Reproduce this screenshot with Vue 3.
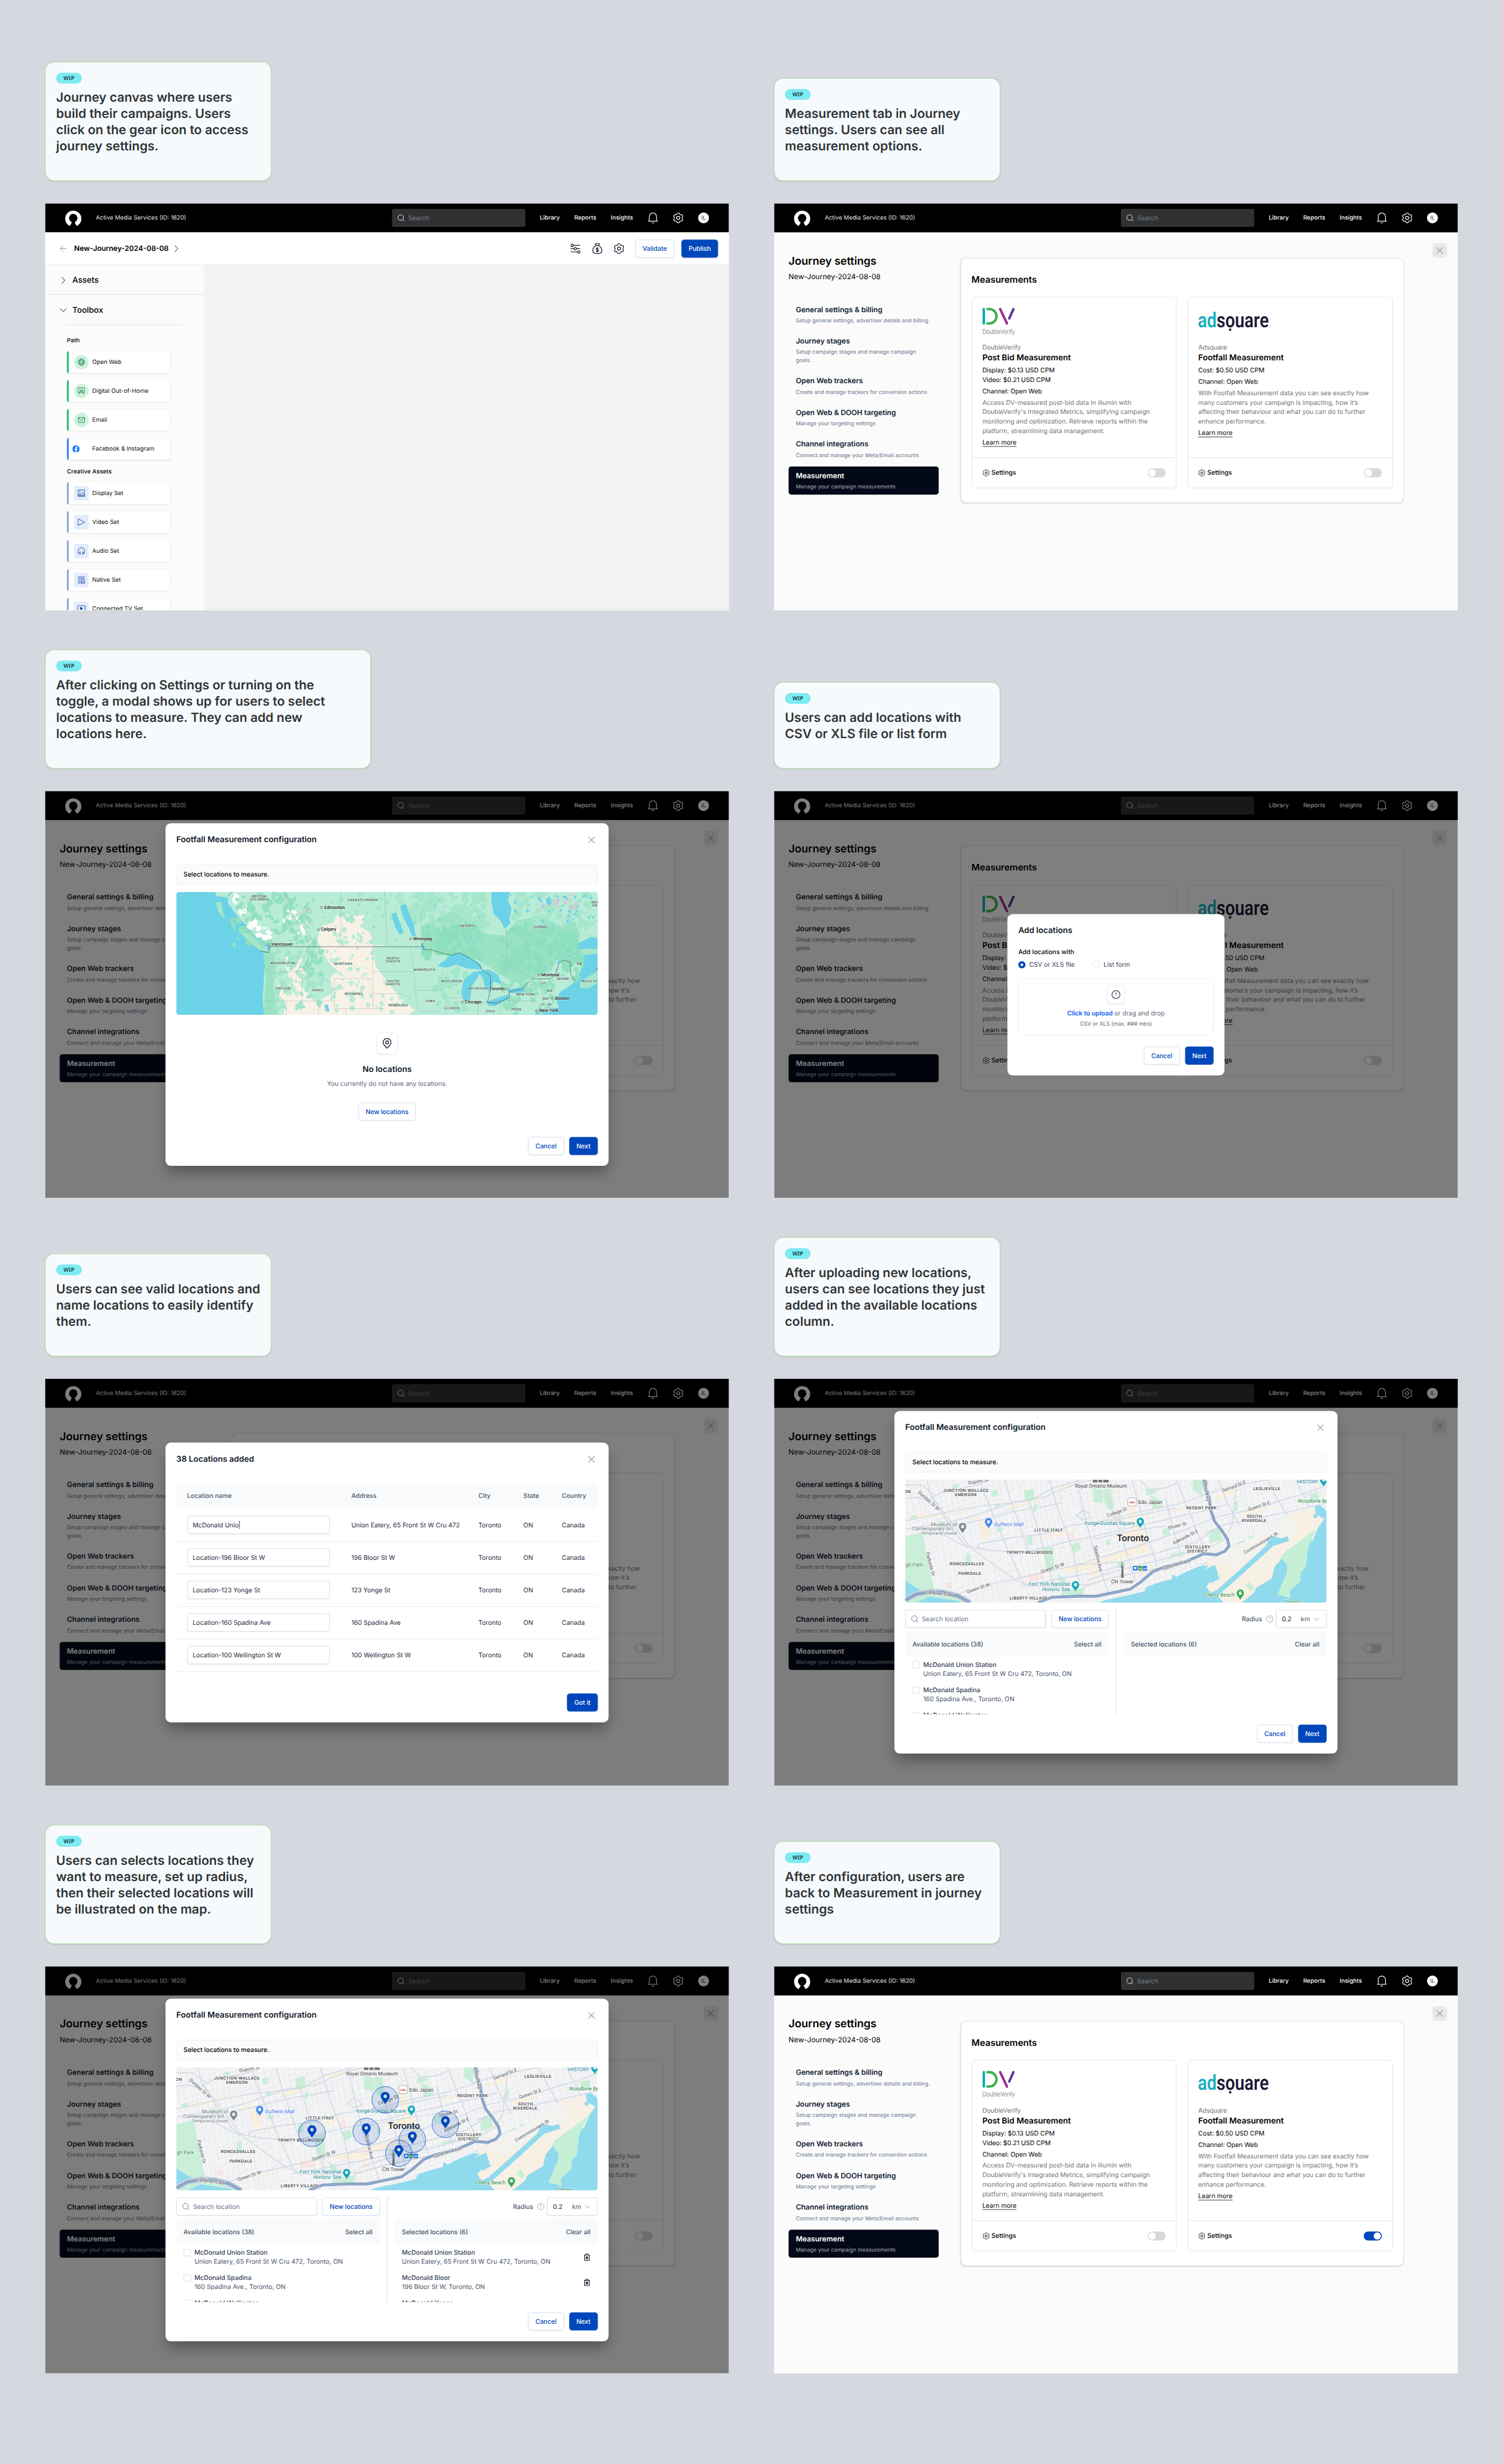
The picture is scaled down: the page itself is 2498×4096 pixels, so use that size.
<script setup>
const boards = [
  { note: 'Journey canvas where users\nbuild their campaigns. Users\nclick on the gear icon to access\njourney settings.', screen: 'canvas' },
  { note: 'Measurement tab in Journey\nsettings. Users can see all\nmeasurement options.', screen: 'settings' },
  { note: 'After clicking on Settings or turning on the\ntoggle, a modal shows up for users to select\nlocations to measure. They can add new\nlocations here.', wide: true, screen: 'settings', modal: 'empty' },
  { note: 'Users can add locations with\nCSV or XLS file or list form', screen: 'settings', modal: 'upload' },
  { note: 'Users can see valid locations and\nname locations to easily identify\nthem.', screen: 'settings', modal: 'table' },
  { note: 'After uploading new locations,\nusers can see locations they just\nadded in the available locations\ncolumn.', screen: 'settings', modal: 'select' },
  { note: 'Users can selects locations they\nwant to measure, set up radius,\nthen their selected locations will\nbe illustrated on the map.', screen: 'settings', modal: 'select', picked: true },
  { note: 'After configuration, users are\nback to Measurement in journey\nsettings', screen: 'settings', on: true },
]

const pathItems = [
  { label: 'Open Web', icon: 'globe' },
  { label: 'Digital Out-of-Home', icon: 'billboard' },
  { label: 'Email', icon: 'mail' },
  { label: 'Facebook & Instagram', icon: 'facebook' },
]
const creativeItems = [
  { label: 'Display Set', icon: 'image' },
  { label: 'Video Set', icon: 'play' },
  { label: 'Audio Set', icon: 'headphones' },
  { label: 'Native Set', icon: 'native' },
  { label: 'Connected TV Set', icon: 'tv' },
]

const nav = [
  { title: 'General settings & billing', text: 'Setup general settings, advertiser details and billing.' },
  { title: 'Journey stages', text: 'Setup campaign stages and manage campaign\ngoals.' },
  { title: 'Open Web trackers', text: 'Create and manage trackers for conversion actions' },
  { title: 'Open Web & DOOH targeting', text: 'Manage your targeting settings' },
  { title: 'Channel integrations', text: 'Connect and manage your Meta/Email accounts' },
  { title: 'Measurement', text: 'Manage your campaign measurements', active: true },
]

const providers = [
  {
    id: 'dv', vendor: 'DoubleVerify', name: 'Post Bid Measurement',
    prices: ['Display: $0.13 USD CPM', 'Video: $0.21 USD CPM'],
    about: "Access DV-measured post-bid data in illumin with\nDoubleVerify's Integrated Metrics, simplifying campaign\nmonitoring and optimization. Retrieve reports within the\nplatform, streamlining data management.",
  },
  {
    id: 'adsquare', vendor: 'Adsquare', name: 'Footfall Measurement',
    prices: ['Cost: $0.50 USD CPM'],
    about: 'With Footfall Measurement data you can see exactly how\nmany customers your campaign is impacting, how it’s\naffecting their behaviour and what you can do to further\nenhance performance.',
  },
]

const tableRows = [
  ['McDonald Unio', 'Union Eatery, 65 Front St W Cru 472'],
  ['Location-196 Bloor St W', '196 Bloor St W'],
  ['Location-123 Yonge St', '123 Yonge St'],
  ['Location-160 Spadina Ave', '160 Spadina Ave'],
  ['Location-100 Wellington St W', '100 Wellington St W'],
]
const available = [
  ['McDonald Union Station', 'Union Eatery, 65 Front St W Cru 472, Toronto, ON'],
  ['McDonald Spadina', '160 Spadina Ave., Toronto, ON'],
  ['McDonald Wellington', '100 Wellington St W, Toronto, ON'],
]
const selected = [
  ['McDonald Union Station', 'Union Eatery, 65 Front St W Cru 472, Toronto, ON'],
  ['McDonald Bloor', '196 Bloor St W, Toronto, ON'],
  ['McDonald Yonge', '123 Yonge St, Toronto, ON'],
]
const pins = [[462, 72], [595, 126], [420, 142], [300, 146], [522, 160], [492, 190]]

/* Six-toothed gear outline in a 24 unit box */
const gear = (() => {
  let d = ''
  for (let i = 0; i < 120; i++) {
    const a = (i / 120) * Math.PI * 2
    const r = 9.75 + 1.25 * Math.tanh(1.9 * (Math.cos(6 * (a - Math.PI / 2)) + 0.05))
    d += (i ? 'L' : 'M') + (12 + r * Math.cos(a)).toFixed(2) + ' ' + (12 - r * Math.sin(a)).toFixed(2)
  }
  return d + 'Z'
})()

const fit = (ox, oy, sx, sy) => {
  const pt = (x, y) => [+((x - ox) / sx).toFixed(1), +((y - oy) / sy).toFixed(1)]
  const line = (s) => 'M' + s.split(' ').map((p) => pt(...p.split(',').map(Number)).join(' ')).join('L')
  return { pt, line, area: (s) => line(s) + 'Z' }
}
const rng = (seed) => () => (seed = (seed * 16807) % 2147483647) / 2147483647

const tor = fit(21, 24, 1.633, 3)
const torStreets = (() => {
  const r = rng(77)
  let d = ''
  for (let x = -70; x < 930; x += 9 + r() * 7) {
    let y = 0
    while (y < 272) {
      const len = 50 + r() * 160
      d += `M${(x + y * 0.2).toFixed(1)} ${y.toFixed(0)}l${(len * 0.2).toFixed(1)} ${len.toFixed(1)}`
      y += len + (r() < 0.4 ? 12 : 0)
    }
  }
  for (let y = 4; y < 560; y += 9 + r() * 7) {
    let x = -10
    while (x < 932) {
      const len = 40 + r() * 130
      d += `M${x.toFixed(0)} ${(y - x * 0.33).toFixed(1)}l${len.toFixed(1)} ${(-len * 0.33).toFixed(1)}`
      x += len + (r() < 0.6 ? 24 : 0)
    }
  }
  return d
})()
const torRoads = [
  '21,300 110,262 290,200 470,165 560,75 660,24', '21,352 170,310 260,270 420,170 520,140 640,50 700,24',
  '21,610 80,590', '80,380 160,340 300,290 400,240 590,180', '280,480 290,450 400,410 520,385 620,330 760,290 860,240 1000,190 1100,130',
  '150,380 230,460 330,495 460,505 620,430 780,370 860,330 960,290 1080,240 1180,190', '220,775 340,715 520,640 640,590 780,510 900,440 1040,350 1150,270 1300,210 1400,150 1480,110 1542,60',
  '640,24 665,240 700,480 740,700 755,770', '740,60 775,260 820,500 850,700', '470,165 520,480 560,740', '100,24 110,120 200,380 250,480',
  '290,24 310,130 380,440 430,640 450,720', '380,24 410,200 470,520', '540,24 580,260 625,480 650,700', '840,24 880,300 930,600',
  '960,150 985,330 1020,540', '1000,24 1060,300 1100,480', '660,230 640,260 660,290 690,280 680,240 660,230',
  '870,24 900,90 960,80 1000,50', '1090,130 1200,70 1330,24', '1150,24 1190,200 1230,330', '1330,24 1370,170 1400,260', '1430,24 1460,130 1480,200',
  '1100,380 1180,320 1270,290 1400,240 1542,180', '640,590 800,570 950,500 1070,440 1140,350', '680,690 760,640 870,590 980,540 1100,480',
  '440,730 560,690 700,640 800,600', '21,150 60,140 100,160 150,110 280,60 320,30', '700,420 820,370 960,330', '690,330 840,270 1000,210',
].map(tor.line)
const torRail = ['110,120 180,290 260,480 420,690 470,730 560,735 680,720 780,670 920,620 1030,580 1100,500 1170,420', '660,735 740,690 860,640 960,600', '21,60 80,60 130,130', '1220,24 1210,170 1200,330 1170,430'].map(tor.line)
const torYellow = ['250,290 290,270 290,370 310,440 330,390 330,320 290,300', '820,180 840,170 880,370 900,460 870,480 840,330', '110,265 230,205 240,215 110,285', '390,210 500,130 510,150 400,225', '520,400 640,350 640,365 530,420', '560,620 700,560 860,470 900,450 900,500 760,570 640,640', '680,600 710,590 720,690 690,680', '780,400 860,350 870,390 790,430', '1140,130 1220,80 1230,100 1150,155', '1230,250 1340,200 1340,215 1240,270', '60,250 110,250 110,275 60,285', '700,130 800,100 800,110 700,140', '970,230 1090,190 1090,200 970,250', '300,740 340,720 340,735 300,750', '560,80 620,50 640,65 570,95'].map(tor.area)
const torPark = ['21,400 85,375 110,640 130,770 40,780 21,700', '450,100 485,80 490,160 455,170', '520,480 555,470 560,630 530,640', '735,90 765,85 775,210 755,225 740,170', '1060,24 1100,24 1090,130 1060,90', '590,760 670,740 660,790 580,800', '1120,360 1160,340 1165,420 1120,450', '905,120 950,170 950,210 915,220', '330,100 355,95 355,130 335,140', '190,60 215,50 215,75 190,90', '615,450 650,440 655,490 630,515', '460,395 480,390 480,460 460,455', '240,520 255,510 260,590 240,600', '950,350 975,345 975,390 952,395', '1260,405 1280,400 1282,440 1262,445', '790,570 815,570 815,605 790,610', '980,520 1030,500 1030,515 980,545', '890,90 930,80 930,110 890,130', '40,265 62,260 62,285 42,290', '345,190 365,185 365,210 345,215', '700,75 735,95 735,180 700,175', '1480,120 1515,105 1515,170 1485,180', '570,650 600,680 600,730 580,720', '485,185 500,185 495,235 483,235', '350,340 375,340 370,370 352,370', '1210,170 1225,165 1220,230 1205,235', '140,300 165,300 160,340 145,350', '745,430 760,420 762,455 748,458', '540,350 565,340 565,370 548,375', '1070,630 1090,620 1080,640 1062,645', '40,790 130,775 220,800 240,840 21,840'].map(tor.area)
const torPink = ['465,650 520,635 522,680 468,700', '770,250 800,250 805,310 780,320', '168,710 188,700 190,750 170,745', '610,380 630,375 635,430 615,430'].map(tor.area)
const torWater = ['720,840 740,825 775,812 830,790 885,765 893,735 940,705 985,685 985,650 1000,670 1030,640 1095,590 1150,520 1200,470 1240,430 1542,430 1542,840', '21,695 60,740 80,760 50,780 21,830', '110,800 160,815 215,830 220,840 60,840', '1500,200 1520,195 1542,230 1542,440 1490,440 1510,350'].map(tor.area)
const torSand = [
  '1095,625 1115,600 1105,560 1150,530 1210,470 1250,440 1320,390 1395,262 1490,210 1510,260 1535,285 1505,360 1440,440 1385,520 1375,560 1355,600 1345,680 1290,740 1280,775 1250,820 1235,840 1170,840 1150,795 1200,700 1190,690 1165,740 1125,775 1108,735 1125,690 1152,655 1140,590',
].map(tor.area)
const torLand = tor.area('1090,600 1150,530 1210,460 1330,370 1400,262 1430,300 1440,380 1330,440 1300,500 1210,620 1180,560 1120,590')
const torChannelBand = ['1158,760 1250,610 1345,450 1405,415'].map(tor.line)
const torBasins = ['1325,460 1340,395 1392,420 1370,445', '1120,690 1150,660 1158,680 1125,712', '1495,255 1508,250 1510,275 1497,280'].map(tor.area)
const torGreen = ['1440,440 1505,350 1475,480 1468,600 1450,640 1448,700 1410,760 1412,820 1395,800 1365,790 1385,700 1400,640 1400,590 1376,540', '1250,730 1262,700 1280,740 1270,765'].map(tor.area)
const torHighway = tor.line('500,840 550,805 650,797 710,798 770,775 835,750 870,705 915,635 955,605 1030,570 1070,540 1100,515 1145,522 1175,500 1190,465 1185,420 1160,350 1138,300 1125,230 1118,140 1105,90 1100,24')
const torWest = tor.line('21,825 60,785 110,768 160,772 210,795 255,840')

const torLabels = [
  ['ON', 30, 104, 'area'], ['JUNCTION-WALLACE', 240, 98, 'area'], ['EMERSON', 240, 125, 'area'], ['LITTLE ITALY', 539, 363, 'area'],
  ['TRINITY-BELLWOODS', 470, 510, 'area'], ['RONCESVALLES', 244, 584, 'area'], ['PARKDALE', 254, 650, 'area'], ['LIBERTY VILLAGE', 467, 812, 'area'],
  ['REGENT PARK', 1091, 212, 'area'], ['LESLIEVILLE', 1327, 87, 'area'], ['SOUTH', 1282, 270, 'area'], ['RIVERDALE', 1281, 297, 'area'],
  ['DISTILLERY', 1077, 473, 'area'], ['DISTRICT', 1076, 500, 'area'],
  ['Dupont St', 285, 34, 'road', -10], ['Dundas St W', 106, 163, 'road', 42], ['College St', 785, 240, 'road', -20], ['Shuter St', 1003, 330, 'road', -14],
  ['Adelaide St E', 1033, 405, 'road', -27], ['Gerrard St E', 1208, 70, 'road', -20], ['Queen St E', 1299, 199, 'road', -18], ['Commissioners St', 1305, 444, 'road', -31],
  ['Queen St W', 553, 609, 'road', -18], ['Queen St W', 284, 744, 'road', -18], ['Spadina Ave.', 718, 551, 'road', 78], ['Parkside Dr', 112, 584, 'road', 76],
  ['Valley Pkwy', 1109, 86, 'road', 83], ['Gardiner Expy', 1000, 587, 'road', -18], ['Gardiner Expy', 145, 779, 'road', 6],
  ['Royal Ontario Museum', 728, 66, 'place'], ['Edo Japan', 906, 174, 'place'], ['CN Tower', 805, 701, 'place'],
  ['Museum of', 208, 319, 'place grey end'], ['Contemporary Art...', 208, 349, 'place grey end'], ['Temporarily closed', 208, 380, 'tiny grey end'],
  ['Dufferin Mall', 395, 319, 'place blue'], ['Yonge-Dundas Square', 850, 313, 'place teal end'], ['Fort York National', 616, 718, 'place teal end'], ['Historic Site', 616, 752, 'place teal end'],
  ['HISTORY', 1512, 38, 'place teal end'], ['Woodbine Be', 1438, 165, 'place green start'], ['Cherry Beach', 1210, 788, 'place green end'], ['gh Park', 22, 587, 'place green start'], ['Tommy', 1422, 834, 'place green'],
  ['Toronto', 843, 414, 'city'],
].map(([t, x, y, k, a]) => ({ t, p: tor.pt(x, y), k, a: a || 0 }))
const torPins = [[322, 348, '#4285f4'], [228, 380, '#7b8794'], [870, 346, '#12a8ba'], [636, 766, '#12a8ba'], [1231, 822, '#34a853'], [1532, 70, '#12a8ba']].map(([x, y, c]) => ({ p: tor.pt(x, y), c }))

const can = fit(62, 423, 1.5525, 1.8233)
const blobs = (seed, zones) => {
  const r = rng(seed)
  return zones.map(([x0, y0, x1, y1, n, size, color]) => {
    let d = ''
    for (let i = 0; i < n; i++) {
      const [cx, cy] = can.pt(x0 + r() * (x1 - x0), y0 + r() * (y1 - y0))
      const s = size * (0.4 + r())
      for (let k = 0; k < 8; k++) {
        const a = (k / 8) * Math.PI * 2
        const q = s * (0.35 + r() * 0.9)
        d += (k ? 'L' : 'M') + (cx + Math.cos(a) * q * 0.9).toFixed(1) + ' ' + (cy + Math.sin(a) * q).toFixed(1)
      }
      d += 'Z'
    }
    return { d, color }
  })
}
const canLand = can.area('195,423 200,440 238,445 240,470 262,505 290,545 310,562 325,592 350,612 378,632 384,655 378,670 362,668 366,720 362,790 358,860 364,918 1294,918 1300,903 1340,893 1376,890 1366,858 1380,826 1408,806 1432,784 1450,740 1462,700 1440,672 1410,690 1380,706 1364,716 1390,680 1440,632 1480,606 1509,602 1509,423')
const canExtra = ['285,585 312,590 342,618 372,646 380,664 352,660 322,634 296,608', '197,465 214,463 228,532 206,502', '1450,812 1446,790 1470,768 1509,742 1509,790 1475,812', '1420,660 1470,650 1509,655 1509,672 1440,680', '1440,590 1509,612 1509,600'].map(can.area)
const canSand = ['560,560 600,548 612,520 640,512 680,520 705,515 710,540 690,560 730,590 735,635 790,640 740,640 745,720 790,790 830,850 880,900 860,918 430,918 436,862 410,840 412,790 440,750 430,700 450,672 490,690 505,740 490,800 540,870 600,830 590,770 610,740 580,700 560,650 545,620', '436,862 600,862 610,918 440,918'].map(can.area)
const canDark = ['905,560 960,530 1010,500 1050,530 1120,590 1190,600 1230,540 1300,520 1380,560 1430,540 1450,600 1380,670 1350,740 1290,770 1230,790 1180,760 1130,720 1060,680 1030,665 990,670 940,650 905,630', '360,670 395,660 405,720 395,800 410,918 362,918 370,760'].map(can.area)
const canBlobs = blobs(4242, [
  [250, 430, 540, 640, 120, 8, '#93e0c0'], [400, 650, 560, 915, 60, 8, '#a4e6cb'], [560, 430, 860, 540, 50, 6, '#a6e7cd'], [870, 430, 1130, 560, 70, 12, '#a6e7cc'],
  [900, 560, 1100, 680, 40, 12, '#8edfbd'], [1180, 560, 1450, 740, 70, 13, '#8edfbd'], [1220, 430, 1500, 560, 60, 9, '#a6e7cc'], [960, 740, 1060, 900, 30, 10, '#a3e6ca'],
  [1180, 790, 1360, 915, 50, 9, '#97e2c3'], [560, 660, 740, 850, 40, 6, '#b9ecd6'], [430, 720, 500, 860, 14, 7, '#b9ecd6'], [600, 560, 780, 640, 34, 5, '#b9ecd6'],
  [610, 780, 860, 910, 30, 6, '#b9ecd6'], [500, 660, 560, 760, 26, 8, '#93e0c0'], [1380, 680, 1450, 780, 14, 8, '#93e0c0'],
  [1310, 430, 1440, 490, 26, 6, '#cfcfd2'], [450, 490, 530, 580, 16, 4, '#cfcfd2'],
  [280, 480, 305, 520, 8, 5, '#fff'], [312, 540, 340, 570, 14, 6, '#fff'], [340, 565, 384, 605, 18, 6, '#fff'], [430, 495, 480, 545, 12, 4, '#fff'], [480, 560, 505, 600, 8, 4, '#fff'], [256, 430, 272, 470, 7, 5, '#fff'],
  [880, 440, 1130, 660, 40, 2, '#6cd2e7'], [1210, 430, 1500, 560, 60, 3, '#6cd2e7'], [560, 560, 860, 700, 12, 2.4, '#6cd2e7'], [1180, 600, 1440, 740, 20, 2, '#6cd2e7'],
])
const canWater = ['1143,423 1208,423 1200,455 1213,490 1205,535 1210,550 1188,572 1176,540 1152,512 1145,470', '830,478 850,472 862,512 878,556 884,600 872,604 862,572 842,528', '800,512 815,505 832,552 842,590 828,594 812,560', '958,722 1000,682 1030,667 1064,682 1108,716 1112,736 1062,732 1022,716 990,728', '1064,762 1084,744 1108,746 1078,800 1070,856 1050,866 1040,830 1048,780', '1096,742 1134,736 1166,756 1180,796 1150,784 1140,830 1124,812 1114,770', '1126,866 1200,836 1206,850 1156,884 1132,880', '1198,816 1262,806 1254,828 1206,832', '904,640 914,636 912,660 902,656', '570,880 582,876 588,906 576,904', '1330,452 1344,440 1350,470 1336,480'].map(can.area)
const canDash = ['439,423 442,500 500,570 545,640 548,644', '627,423 627,644', '777,423 786,640', '903,644 903,510 970,423', '737,644 737,893', '737,744 878,744', '865,644 878,744 882,820 892,905 968,905', '605,773 737,773', '605,773 605,893 775,893', '358,863 605,863', '494,863 494,740 513,700 513,644', '366,736 400,750 500,740', '515,700 540,760 560,770 600,790', '737,833 838,833 870,858', '880,820 975,820', '440,863 440,918', '550,863 550,918', '990,850 1050,850', '1195,572 1195,700 1240,750 1290,770', '975,820 990,850 985,918', '1100,870 1180,862 1290,862', '1175,862 1175,918', '1098,868 1098,918', '645,893 645,918', '1313,775 1320,860', '1356,760 1345,860', '1437,480 1430,520 1480,550 1509,540'].map(can.line)
const canBorder = ['380,644 903,644 906,630 912,655 940,657 980,672 1008,678 1032,668 1070,690 1098,712 1116,742 1140,760 1142,810 1130,868 1160,872 1205,850 1205,825 1245,815 1285,773 1346,773 1366,752 1375,712 1390,698 1414,706 1416,752 1432,782', '240,440 252,423', '350,660 378,668 384,645'].map(can.line)
const canLabels = [
  ['BRITISH', 347, 441, 'area'], ['COLUMBIA', 347, 454, 'area'], ['SASKATCHEWAN', 702, 456, 'area'], ['ONTARIO', 1061, 559, 'area'], ['QUEBEC', 1314, 565, 'area'], ['NEW', 1487, 465, 'area start'], ['AN', 1490, 478, 'area start'],
  ['WASHINGTON', 428, 710, 'area'], ['MONTANA', 635, 713, 'area'], ['NORTH', 806, 690, 'area'], ['DAKOTA', 806, 704, 'area'], ['MINNESOTA', 914, 736, 'area'], ['SOUTH', 806, 782, 'area'], ['DAKOTA', 806, 796, 'area'],
  ['OREGON', 428, 811, 'area'], ['IDAHO', 547, 819, 'area'], ['WYOMING', 671, 835, 'area'], ['NEBRASKA', 824, 879, 'area'], ['IOWA', 934, 864, 'area'], ['WISCONSIN', 1007, 783, 'area'], ['MICHIGAN', 1098, 811, 'area'], ['ILLINOIS', 1009, 893, 'area'],
  ['OHIO', 1140, 905, 'area'], ['PENN', 1230, 898, 'area'], ['NEW YORK', 1262, 837, 'area'], ['VT', 1323, 793, 'area'], ['NH', 1343, 823, 'area'], ['MA', 1330, 853, 'area'], ['CT', 1320, 877, 'area'], ['RI', 1345, 877, 'area'], ['MAINE', 1390, 774, 'area'], ['NB', 1446, 713, 'area'], ['NOVA SCO', 1454, 783, 'area start'], ['P', 1502, 735, 'area start'],
  ['Edmonton', 570, 486, 'town', 561], ['Calgary', 558, 575, 'town', 550], ['Vancouver', 389, 636, 'town', 381], ['Winnipeg', 875, 613, 'town', 866], ['Montreal', 1315, 758, 'town', 1307], ['Chicago', 1053, 868, 'town', 1044], ['Boston', 1362, 854, 'town', 1354], ['New York', 1308, 902, 'town', 1299], ['Toronto', 1190, 815, 'town end', 1198],
].map(([t, x, y, k, d]) => ({ t, p: can.pt(x, y), k, dot: d ? can.pt(d, y) : null }))
</script>

<template>
  <svg class="sprite" aria-hidden="true">
    <defs>
      <symbol id="i-gear" viewBox="0 0 24 24"><path :d="gear" /><circle cx="12" cy="12" r="3.5" /></symbol>
      <symbol id="i-bell" viewBox="0 0 24 24"><path d="M4 19.2V9a8 8 0 0 1 16 0v10.2M1.2 19.2h21.6M9.2 23h5.6" /></symbol>
      <symbol id="i-search" viewBox="0 0 16 16"><circle cx="7.2" cy="7.2" r="6.2" /><path d="m11.6 11.8 3.8 3.8" /></symbol>
      <symbol id="i-x" viewBox="0 0 16 16"><path d="m1.2 1.2 13.6 13.6M14.8 1.2 1.2 14.8" /></symbol>
      <symbol id="i-back" viewBox="0 0 16 16"><path d="M15 8H1.4M8 1.2 1.4 8 8 14.8" /></symbol>
      <symbol id="i-right" viewBox="0 0 16 16"><path d="m4.6 1 6.8 7-6.8 7" /></symbol>
      <symbol id="i-down" viewBox="0 0 16 16"><path d="m1 4.6 7 6.8 7-6.8" /></symbol>
      <symbol id="i-sliders" viewBox="0 0 24 24"><circle cx="4.4" cy="4.8" r="2.6" /><path d="M7 4.8h15M1 12h7.9M14.1 12H22M1 19.2h15.4" /><circle cx="11.5" cy="12" r="2.6" /><circle cx="19" cy="19.2" r="2.6" /></symbol>
      <symbol id="i-money" viewBox="0 0 24 24"><path d="M8.6 5.4 7.4 1.2h9.2l-1.2 4.2zM8.6 5.4C4.6 8.2 2 12 2 16c0 4.6 2.6 6.7 6.5 6.7h7c3.9 0 6.5-2.1 6.5-6.7 0-4-2.6-7.800-6.6-10.6" /><path d="M14.6 11.9c-.5-.9-1.4-1.3-2.6-1.3-1.5 0-2.6.7-2.6 1.9 0 2.6 5.3 1.3 5.3 4 0 1.2-1.1 2-2.7 2-1.4 0-2.4-.6-2.8-1.6M12 9v11" /></symbol>
      <symbol id="i-globe" viewBox="0 0 16 16"><circle cx="8" cy="8" r="7" /><ellipse cx="8" cy="8" rx="3.6" ry="7" /><path d="M1.7 5.4h12.6M1.7 10.6h12.6" /></symbol>
      <symbol id="i-billboard" viewBox="0 0 16 16"><path d="M.6 1h14.8v10.4H.6zM3.4 11.4V15M12.6 11.4V15M3.8 8.8l2.6-4 2 2.8 1.4-2.4 2.6 3.6z" /></symbol>
      <symbol id="i-mail" viewBox="0 0 16 16"><path d="M1.2 2.6h13.6v10.8H1.2zM1.2 3l6.8 6 6.8-6" /></symbol>
      <symbol id="i-image" viewBox="0 0 16 16"><path d="M.7.9h14.6v14.2H.7zM.9 11.6l3.4-2 2.2 1.6 4-4.8 4.6 5.6M.9 13h14" /><circle cx="4.7" cy="4.8" r=".7" /></symbol>
      <symbol id="i-play" viewBox="0 0 16 16"><path d="m.8.8 14.4 7.2L.8 15.2z" /></symbol>
      <symbol id="i-headphones" viewBox="0 0 16 16"><path d="M.8 14V7.6a7.2 7 0 0 1 14.4 0V14M5.4 9.600v5.600c-1.6 0-2.4-1-2.4-2.8s.8-2.8 2.4-2.8zM10.6 9.6v5.6c1.6 0 2.4-1 2.4-2.8s-.8-2.8-2.4-2.8z" /></symbol>
      <symbol id="i-native" viewBox="0 0 16 16"><path d="M0 .8h16M0 4h16M0 7.6h5.6M0 11.2h5.6M0 14.6h5.6M7.6 7.4H15.4v8H7.6zM8 14.4l2.4-3 1.6 1.6 1.4-2 1.6 2.6" /></symbol>
      <symbol id="i-tv" viewBox="0 0 18 16"><path d="M.8.8h16.4v12.4H.8z" /><path d="m7 4 5 3-5 3z" fill="currentColor" /></symbol>
      <symbol id="i-facebook" viewBox="0 0 16 16"><path stroke="none" fill="#1877f2" d="M16 8a8 8 0 1 0-9.25 7.9v-5.59H4.72V8h2.03V6.24c0-2 1.19-3.11 3.02-3.11.88 0 1.79.16 1.79.16v1.97h-1.01c-.99 0-1.3.62-1.3 1.25V8h2.22l-.36 2.31H9.25v5.59A8 8 0 0 0 16 8z" /></symbol>
      <symbol id="i-pin" viewBox="0 0 20 24"><path d="M10 22.600C5.200 18 1.2 14.4 1.2 9.7a8.8 8.6 0 0 1 17.6 0c0 4.7-4 8.3-8.8 12.9z" /><circle cx="10" cy="9.7" r="3.3" /></symbol>
      <symbol id="i-alert" viewBox="0 0 20 20"><circle cx="10" cy="10" r="8.8" /><path d="M10 5.6v5M10 13.4v1" /></symbol>
      <symbol id="i-help" viewBox="0 0 16 16"><circle cx="8" cy="8" r="7.2" /><path d="M6 6.2c.1-1.2.9-1.9 2-1.9s2 .7 2 1.8c0 1.5-1.9 1.5-1.9 3.1M8.05 11v.9" /></symbol>
      <symbol id="i-trash" viewBox="0 0 14 16"><path d="M.4 3.4h13.2M4.4 3.2V.8h5.2v2.4M1.8 3.6v11.6h10.4V3.6M5.2 6.2v6.2M7 6.2v6.2M8.8 6.2v6.2" /></symbol>
      <symbol id="i-marker" viewBox="0 0 20 28"><path fill="#0047bb" stroke="none" fill-rule="evenodd" d="M10 28C7 20.500 0 16.500 0 9.800a10 9.800 0 0 1 20 0C20 16.500 13 20.500 10 28zM10 6a3.800 3.900 0 1 0 0 7.800A3.800 3.900 0 0 0 10 6z" /></symbol>
    </defs>
  </svg>

  <div class="viewport">
  <main class="sheet">
    <section v-for="(b, i) in boards" :key="i" class="cell">
      <div class="note-area">
        <article class="note" :class="{ wide: b.wide }">
          <span class="pill">WIP</span>
          <p>{{ b.note }}</p>
        </article>
      </div>

      <div class="frame">
        <header class="topbar">
          <svg class="logo" viewBox="0 0 36 35"><path fill="#fff" d="M10.4 35A18 17.8 0 1 1 25.6 35L21 26.7a9.2 9.6 0 1 0-6 0z" /></svg>
          <span class="account">Active Media Services (ID: 1620)</span>
          <div class="top-search"><svg class="ic s16"><use href="#i-search" /></svg>Search</div>
          <nav class="top-links"><span>Library</span><span>Reports</span><span>Insights</span></nav>
          <svg class="ic s24"><use href="#i-bell" /></svg>
          <svg class="ic s24"><use href="#i-gear" /></svg>
          <span class="avatar">IL</span>
        </header>

        <template v-if="b.screen === 'canvas'">
          <div class="toolbar">
            <svg class="ic s16 muted"><use href="#i-back" /></svg>
            <b>New-Journey-2024-08-08</b>
            <svg class="ic s16"><use href="#i-right" /></svg>
            <div class="tools">
              <svg class="ic s24"><use href="#i-sliders" /></svg>
              <svg class="ic s24"><use href="#i-money" /></svg>
              <svg class="ic s24"><use href="#i-gear" /></svg>
            </div>
            <button class="btn ghost">Validate</button>
            <button class="btn solid">Publish</button>
          </div>
          <div class="work">
            <aside class="side">
              <div class="fold first"><svg class="ic s16"><use href="#i-right" /></svg>Assets</div>
              <div class="fold"><svg class="ic s16"><use href="#i-down" /></svg>Toolbox</div>
              <div class="kit">
                <h6>Path</h6>
                <div v-for="p in pathItems" :key="p.icon" class="tool path" :class="p.icon">
                  <i><svg class="ic s16"><use :href="'#i-' + p.icon" /></svg></i>{{ p.label }}
                </div>
                <h6>Creative Assets</h6>
                <div v-for="p in creativeItems" :key="p.icon" class="tool creative" :class="p.icon">
                  <i><svg class="ic s16"><use :href="'#i-' + p.icon" /></svg></i>{{ p.label }}
                </div>
              </div>
            </aside>
            <div class="board"></div>
          </div>
        </template>

        <div v-else class="settings">
          <aside class="menu">
            <h1>Journey settings</h1>
            <p class="journey">New-Journey-2024-08-08</p>
            <ul>
              <li v-for="n in nav" :key="n.title" :class="{ active: n.active }"><b>{{ n.title }}</b><span>{{ n.text }}</span></li>
            </ul>
          </aside>
          <section class="card">
            <h2>Measurements</h2>
            <div class="providers">
              <article v-for="p in providers" :key="p.id" class="provider">
                <div class="body">
                  <svg v-if="p.id === 'dv'" class="brand" viewBox="0 0 160 60">
                    <g fill="none" stroke-width="5.4" stroke-linecap="round">
                      <path stroke="#00aeb0" d="M2.7 2.7v31.8" />
                      <path stroke="#3fb04c" d="M10.6 2.7H15a15.9 15.9 0 0 1 0 31.8h-4.4" />
                      <path stroke="#9c2a90" d="m39 2.7 15 31.8" />
                      <path stroke="#5a3a98" d="M68.3 2.7 59 23.4" />
                    </g>
                    <text x="-.5" y="57" textLength="72" lengthAdjust="spacingAndGlyphs" class="dv-name">DoubleVerify</text>
                  </svg>
                  <svg v-else class="brand" viewBox="0 0 160 60">
                    <text x="-1" y="42.400" textLength="157" lengthAdjust="spacingAndGlyphs" class="adsq"><tspan fill="#14b0bf">ad</tspan>sọuare</text>
                  </svg>
                  <span class="vendor">{{ p.vendor }}</span>
                  <h3>{{ p.name }}</h3>
                  <p><template v-for="x in p.prices" :key="x">{{ x }}<br></template></p>
                  <p>Channel: Open Web</p>
                  <p class="about">{{ p.about }}</p>
                  <p><a>Learn more</a></p>
                </div>
                <footer>
                  <svg class="ic s16"><use href="#i-gear" /></svg>Settings
                  <span class="toggle" :class="{ on: b.on && p.id === 'adsquare' }"><i></i></span>
                </footer>
              </article>
            </div>
          </section>
          <span class="close"><svg class="ic s16"><use href="#i-x" /></svg></span>
        </div>

        <div v-if="b.modal" class="scrim">
          <div v-if="b.modal === 'upload'" class="modal upload">
            <h4>Add locations</h4>
            <label class="q">Add locations with</label>
            <div class="radios"><span><i class="on"></i>CSV or XLS file</span><span><i></i>List form</span></div>
            <div class="drop">
              <span class="tile s40"><svg class="ic s20"><use href="#i-alert" /></svg></span>
              <p><b>Click to upload</b> or drag and drop</p>
              <small>CSV or XLS (max. ### mbs)</small>
            </div>
            <div class="actions"><button class="btn ghost">Cancel</button><button class="btn solid">Next</button></div>
          </div>

          <div v-else-if="b.modal === 'table'" class="modal table">
            <div class="head"><h4>38 Locations added</h4><svg class="ic s16"><use href="#i-x" /></svg></div>
            <div class="tr th"><span>Location name</span><span>Address</span><span>City</span><span>State</span><span>Country</span></div>
            <div v-for="(r, k) in tableRows" :key="r[0]" class="tr">
              <span><em class="field">{{ r[0] }}<i v-if="!k" class="caret"></i></em></span><span>{{ r[1] }}</span><span>Toronto</span><span>ON</span><span>Canada</span>
            </div>
            <div class="actions"><button class="btn solid">Got it</button></div>
          </div>

          <div v-else class="modal big">
            <div class="head"><h4>Footfall Measurement configuration</h4><svg class="ic s16"><use href="#i-x" /></svg></div>
            <div class="hint">Select locations to measure.</div>

            <svg v-if="b.modal === 'empty'" class="map" viewBox="0 0 932 272">
              <rect width="932" height="272" fill="#6cd2e7" />
              <path :d="canLand" fill="#b9ecd6" />
              <path v-for="d in canExtra" :key="d" :d="d" fill="#a4e6cb" />
              <path v-for="d in canSand" :key="d" :d="d" fill="#f8f1e6" />
              <path v-for="d in canDark" :key="d" :d="d" fill="#9ae2c4" />
              <path v-for="(z, k) in canBlobs" :key="k" :d="z.d" :fill="z.color" />
              <path v-for="d in canWater" :key="d" :d="d" fill="#6cd2e7" />
              <g fill="none" stroke="#7d9a95" stroke-width=".8" stroke-dasharray="2 1.6"><path v-for="d in canDash" :key="d" :d="d" /></g>
              <g fill="none" stroke="#4b5c5c" stroke-width="1"><path v-for="d in canBorder" :key="d" :d="d" /></g>
              <g v-for="(l, k) in canLabels" :key="k">
                <circle v-if="l.dot" :cx="l.dot[0]" :cy="l.dot[1]" r="2.2" fill="#fff" stroke="#333" />
                <text :x="l.p[0]" :y="l.p[1]" :class="['ml', 'ca', ...l.k.split(' ')]">{{ l.t }}</text>
              </g>
            </svg>

            <svg v-else class="map" viewBox="0 0 932 272">
              <rect width="932" height="272" fill="#f4f4f5" />
              <path v-for="d in torYellow" :key="d" :d="d" fill="#fdf1dc" />
              <path v-for="d in torPink" :key="d" :d="d" fill="#fde3e1" />
              <path v-for="d in torPark" :key="d" :d="d" fill="#c5f0d5" />
              <path :d="torStreets" fill="none" stroke="#e0e4eb" stroke-width="1" />
              <path v-for="d in torWater" :key="d" :d="d" fill="#90daee" />
              <path v-for="d in torSand" :key="d" :d="d" fill="#f7f0e4" />
              <path :d="torLand" fill="#f4f2ef" />
              <path v-for="d in torChannelBand" :key="d" :d="d" fill="none" stroke="#90daee" stroke-width="11" />
              <path v-for="d in torBasins" :key="d" :d="d" fill="#90daee" />
              <path v-for="d in torGreen" :key="d" :d="d" fill="#c5f0d5" />
              <g fill="none" stroke="#d9dadd" stroke-width="2.2"><path v-for="d in torRail" :key="d" :d="d" /></g>
              <g fill="none" stroke="#d2dae5" stroke-width="2.2" stroke-linejoin="round"><path v-for="d in torRoads" :key="d" :d="d" /></g>
              <path :d="torWest" fill="none" stroke="#c9d3df" stroke-width="13" />
              <g fill="none" stroke-linejoin="round">
                <path v-for="d in [torHighway, torWest]" :key="'o' + d" :d="d" stroke="#6f8cb5" stroke-width="6" />
                <path v-for="d in [torHighway, torWest]" :key="d" :d="d" stroke="#8fa8cb" stroke-width="4.4" />
              </g>
              <g fill="#777"><path d="M479 182h1.6l.6 10h2.4v2h-1.6l1.4 23h-6.2l1.4-23H476v-2h2.4z" /><path d="M415 0h10v6h-10zM427 0h9v6h-9zM438 0h12v6h-12z" /></g>
              <g><rect x="492.5" y="40.5" width="18" height="18" rx="2" fill="#fff" stroke="#999" /><text x="501.5" y="52" class="edo">edo</text></g>
              <g class="transit"><rect x="503.5" y="191" width="10" height="10" rx="1.5" fill="#1a73e8" /><path d="M506 193.5h5v4.5h-5zM506.5 200l1-1.5M510.5 200l-1-1.5" fill="#fff" /><rect x="514.5" y="191" width="9" height="10" rx="1.5" fill="#3f9142" /><text x="519" y="198.3">GO</text><rect x="524.5" y="191" width="10" height="10" rx="1.5" fill="#1a73e8" /><text x="529.5" y="198.3">UP</text></g>
              <g v-for="(l, k) in torLabels" :key="k" :transform="`translate(${l.p[0]} ${l.p[1]}) rotate(${l.a})`"><text :class="['ml', 'to', ...l.k.split(' ')]">{{ l.t }}</text></g>
              <g v-for="(q, k) in torPins" :key="'q' + k" :transform="`translate(${q.p[0]} ${q.p[1]})`">
                <path :fill="q.c" d="M0 0C-1.5-5-8-8.5-8-15a8 8 0 0 1 16 0C8-8.5 1.5-5 0 0z" /><path fill="#fff" d="M-3.5-17 0-19l3.5 2v1h-7zM-3-15.5h6v4h-6z" />
              </g>
              <template v-if="b.picked">
                <g v-for="(q, k) in pins" :key="'p' + k">
                  <circle :cx="q[0]" :cy="q[1]" r="29.5" fill="#0047bb" fill-opacity=".12" stroke="#0047bb" />
                  <use href="#i-marker" :x="q[0] - 10" :y="q[1] - 18" width="20" height="28" />
                </g>
              </template>
            </svg>

            <div v-if="b.modal === 'empty'" class="empty">
              <span class="tile s48"><svg class="ic pin"><use href="#i-pin" /></svg></span>
              <h4>No locations</h4>
              <p>You currently do not have any locations.</p>
              <button class="btn ghost">New locations</button>
            </div>
            <div v-else class="pick">
              <div class="col">
                <div class="row"><div class="field grow"><svg class="ic s16"><use href="#i-search" /></svg>Search location</div><button class="btn ghost">New locations</button></div>
                <div class="bar"><span>Available locations (38)</span><span>Select all</span></div>
                <div v-for="a in available" :key="a[0]" class="loc"><i class="box"></i><p><b>{{ a[0] }}</b>{{ a[1] }}</p></div>
              </div>
              <div class="rule"></div>
              <div class="col">
                <div class="row end"><span>Radius</span><svg class="ic s16 help"><use href="#i-help" /></svg><div class="field radius"><b>0.2</b><span>km</span><svg class="ic s13"><use href="#i-down" /></svg></div></div>
                <div class="bar"><span>Selected locations (6)</span><span>Clear all</span></div>
                <template v-if="b.picked">
                  <div v-for="a in selected" :key="a[0]" class="loc"><p><b>{{ a[0] }}</b>{{ a[1] }}</p><svg class="ic trash"><use href="#i-trash" /></svg></div>
                </template>
              </div>
            </div>
            <div class="actions"><button class="btn ghost">Cancel</button><button class="btn solid">Next</button></div>
          </div>
        </div>
      </div>
    </section>
  </main>
  </div>
</template>

<style>
html, body { margin: 0; background: #d5d9df; }
</style>

<style scoped>
* { box-sizing: border-box; margin: 0; padding: 0; }
.sprite { display: none; }
.viewport { width: 2498px; height: 4096px; overflow: hidden; }
.sheet { transform: scale(.7515); transform-origin: 0 0; width: 3324px; height: 5450px; padding: 50px 100px 0; display: grid; grid-template-columns: 1512px 1512px; grid-auto-rows: 1300px; column-gap: 100px; align-content: start; background: #d5d9df; font: 400 14px/21px Inter, "Liberation Sans", sans-serif; color: #000; text-rendering: geometricPrecision; overflow: hidden; }
.note-area { height: 400px; padding-bottom: 50px; display: flex; align-items: flex-end; }
.cell { margin-top: 0; height: 1300px; }
.note-area { height: 350px; padding-bottom: 0; margin-bottom: 50px; }
.note { width: 500px; padding: 24px 23px 58px; border: 1px solid #a9ec90; border-radius: 20px; background: #f7fafc; box-shadow: 0 1px 3px rgba(16, 24, 40, .12); }
.note.wide { width: 720px; }
.pill { display: block; width: 57px; height: 24px; border-radius: 12px; background: #7debf2; color: #0d3540; font: 600 12px/24px "Noto Sans", sans-serif; letter-spacing: .3px; text-align: center; margin-top: -1px; }
.note p { margin-top: 12px; font-size: 28px; line-height: 36px; font-weight: 600; color: #2f3437; white-space: pre; }
.frame { position: relative; width: 1512px; height: 900px; overflow: hidden; background: #fbfbfb; display: flex; flex-direction: column; }

.ic { display: block; flex: none; fill: none; stroke: currentColor; stroke-width: 1.2; overflow: visible; }
.s13 { width: 13px; height: 13px; }
.s16 { width: 16px; height: 16px; }
.s20 { width: 20px; height: 20px; stroke-width: 1.7; }
.s24 { width: 24px; height: 24px; stroke-width: 1.6; }

.topbar { height: 64px; flex: none; background: #000; color: #fff; display: flex; align-items: center; padding: 0 44px; gap: 32px; }
.logo { width: 36px; height: 35px; margin-bottom: -1px; }
.account { font-size: 13px; color: #e2e2e2; margin-right: auto; }
.top-search { width: 295px; height: 40px; border-radius: 4px; background: #2f3133; color: #7d8084; display: flex; align-items: center; gap: 8px; padding-left: 12px; }
.top-search .ic { color: #fff; }
.top-links { display: flex; gap: 32px; font-size: 13px; font-weight: 500; letter-spacing: .05px; }
.avatar { width: 24px; height: 24px; border-radius: 50%; background: #fff; color: #333; font-size: 12px; line-height: 24px; text-align: center; }

.btn { height: 40px; padding: 0 15px; border: 1px solid #cbd9f1; border-radius: 6px; background: #fff; color: #0047bb; font: 500 14px/20px Inter, sans-serif; box-shadow: 0 1px 2px rgba(16, 24, 40, .06); flex: none; }
.btn.solid { background: #0047bb; border-color: #0047bb; color: #fff; }

.toolbar { height: 72px; flex: none; background: #fff; border-bottom: 1px solid #d9d9d9; display: flex; align-items: center; padding: 0 24px 0 32px; gap: 16px; }
.toolbar b { font-size: 16px; font-weight: 600; margin-right: -7px; }
.toolbar .muted { color: #888; }
.tools { display: flex; gap: 24px; margin-left: auto; margin-right: 8px; color: #0f172a; }
.work { flex: 1; display: flex; min-height: 0; }
.side { width: 352px; overflow: hidden; background: #fbfbfb; }
.board { flex: 1; background: #f2f2f2; }
.fold { height: 66px; display: flex; align-items: center; gap: 12px; padding-left: 32px; padding-top: 2px; font-size: 18px; font-weight: 500; }
.fold.first { border-bottom: 1px solid #d9d9d9; }
.kit { margin-left: 48px; width: 256px; border-top: 1px solid #d9d9d9; padding-top: 24px; }
.kit h6 { font-size: 13px; line-height: 20px; font-weight: 500; margin-bottom: 14px; letter-spacing: .1px; }
.tool { width: 228px; height: 48px; margin-bottom: 16px; border-left: 4px solid #00b85c; border-radius: 4px; background: #fff; box-shadow: 0 1px 2px rgba(0, 0, 0, .1); display: flex; align-items: center; gap: 8px; padding-left: 12px; font-size: 13px; color: #111; }
.tool i { width: 32px; height: 32px; display: grid; place-items: center; border-radius: 50%; background: #cdf1de; color: #15803d; }
.tool.facebook { border-color: #1877f2; }
.tool.facebook i { background: none; place-items: center start; margin-left: -4px; width: 36px; }
.tool.creative { border-color: #7c9fd9; }
.tool.creative i { border-radius: 0; background: #e3ecfb; color: #0c3f97; }
.tool.tv .ic { width: 18px; }

.settings { flex: 1; display: flex; padding: 0 24px 0 32px; align-items: flex-start; }
.menu { width: 332px; padding-top: 47px; }
.menu h1 { font-size: 24px; line-height: 32px; font-weight: 600; }
.journey { font-size: 16px; line-height: 24px; margin-top: 7px; }
.menu ul { list-style: none; margin-top: 39.5px; display: flex; flex-direction: column; gap: 8px; }
.menu li { padding: 8px 16px; border-radius: 6px; }
.menu li b { display: block; font-size: 16px; line-height: 24px; font-weight: 600; color: #101b30; }
.menu li span { display: block; margin-top: 4px; font-size: 12px; line-height: 18px; color: #66758d; white-space: pre; }
.menu li.active { background: #030918; }
.menu li.active b { color: #fff; }
.menu li.active span { color: #a9adb5; }
.card { width: 979px; height: 541px; margin: 57px 64px 0 48.5px; padding: 0 23px; border: 1px solid #ececec; border-radius: 12px; background: #fff; box-shadow: 0 1px 3px rgba(0, 0, 0, .16); }
.card h2 { font-size: 20px; line-height: 28px; font-weight: 600; padding: 32px 0 25px; }
.providers { display: grid; grid-template-columns: 1fr 1fr; gap: 24px; }
.provider { height: 423px; border: 1px solid #d9d9d9; border-radius: 8px; display: flex; flex-direction: column; }
.body { height: 354.5px; padding: 23px; border-bottom: 1px solid #d9d9d9; }
.body .brand { display: block; width: 160px; height: 60px; margin-bottom: 17px; overflow: visible; }
.dv-name { font: 300 14.5px Roboto, sans-serif; fill: #55565a; }
.adsq { font: 600 45.5px Roboto, sans-serif; fill: #1c1a35; }
.vendor { display: block; color: #707070; }
.body h3 { font-size: 18px; line-height: 26px; font-weight: 600; }
.body p { margin-top: 4px; }
.body .about { white-space: pre; color: #747474; }
.body a { border-bottom: 1px solid #000; }
.provider footer { flex: 1; display: flex; align-items: center; gap: 4px; padding: 0 23px; font-weight: 500; }
.provider footer .ic { stroke-width: 1.9; }
.toggle { margin-left: auto; width: 40px; height: 20px; border-radius: 10px; background: #d9d9d9; padding: 2px; }
.toggle i { display: block; width: 16px; height: 16px; border-radius: 50%; background: #fff; }
.toggle.on { background: #0047bb; }
.toggle.on i { margin-left: auto; }
.close { width: 32px; height: 32px; margin-top: 24px; border-radius: 6px; background: #e9e9e9; color: #94a3b8; display: grid; place-items: center; }
.close .ic, .head .ic { stroke-width: 1.7; }

.scrim { position: absolute; inset: 0; background: rgba(0, 0, 0, .5); display: grid; place-items: center; }
.modal { background: #fff; border-radius: 12px; padding: 24px; display: flex; flex-direction: column; box-shadow: 0 18px 30px -4px rgba(0, 0, 0, .32); }
.modal h4 { font-size: 18px; line-height: 26px; font-weight: 600; color: #101828; }
.actions { margin-top: auto; display: flex; justify-content: flex-end; gap: 12px; }
.head { display: flex; justify-content: space-between; align-items: center; height: 26px; flex: none; padding-right: 6px; margin-bottom: 41px; color: #94a3b8; }
.field { display: flex; align-items: center; height: 40px; border: 1px solid #cbd5e1; border-radius: 6px; padding: 0 12px; font-style: normal; box-shadow: 0 1px 2px rgba(16, 24, 40, .06); background: #fff; }
.tile { display: grid; place-items: center; border: 1px solid #e4e7ec; border-radius: 10px; background: #fff; box-shadow: 0 1px 2px rgba(16, 24, 40, .05); }
.s40 { width: 40px; height: 40px; border-radius: 8px; }
.s48 { width: 48px; height: 48px; }

.big { width: 980px; height: 758px; }
.hint { height: 45px; flex: none; border: 1px solid #e9e9e9; border-radius: 4px; background: #fbfbfb; padding-left: 15px; line-height: 43px; font-weight: 500; }
.map { display: block; flex: none; width: 932px; height: 272px; margin-top: 16px; border-radius: 6px; overflow: hidden; }
.empty { display: flex; flex-direction: column; align-items: center; padding-top: 39px; }
.pin { width: 20px; height: 24px; stroke-width: 1.8; color: #101828; }
.empty h4 { margin-top: 21px; }
.empty p { margin-top: 8px; color: #5b6676; }
.empty .btn { margin-top: 31px; }

.pick { display: grid; grid-template-columns: 450px 1px 449px; justify-content: space-between; margin-top: 16px; height: 231px; overflow: hidden; }
.rule { background: #ccd3dc; }
.row { display: flex; gap: 12px; height: 40px; align-items: center; margin-bottom: 8px; color: #344054; }
.row.end { justify-content: flex-end; gap: 0; }
.grow { flex: 1; gap: 8px; color: #667085; }
.grow .ic { color: #5b6b80; }
.help { margin: 0 6px 0 9px; color: #98a2b3; }
.radius { width: 112px; }
.radius b { font-weight: 400; color: #101828; }
.radius span { margin-left: auto; color: #475467; }
.radius .ic { margin-left: 8px; margin-right: 3px; color: #667085; }
.bar { height: 56px; border-radius: 8px; background: #f8fafb; padding: 0 16px; display: flex; justify-content: space-between; align-items: center; font-weight: 500; color: #475467; margin-bottom: 8px; }
.loc { height: 56px; display: flex; padding: 0 17px 0 16px; gap: 8px; color: #475467; }
.loc p { flex: 1; line-height: 20px; }
.loc b { display: block; font-weight: 500; color: #344054; }
.box { width: 16px; height: 16px; margin-top: 2px; border: 1px solid #cbd5e1; border-radius: 4px; }
.trash { width: 14px; height: 16px; margin-top: 12px; color: #0f172a; stroke-width: 1.4; }

.upload { width: 480px; height: 357px; box-shadow: none; }
.q { margin-top: 24px; font-weight: 500; line-height: 20px; }
.radios { display: flex; gap: 40px; margin-top: 8px; line-height: 20px; color: #344054; }
.radios span { display: flex; align-items: center; gap: 8px; }
.radios i { width: 16px; height: 16px; border-radius: 50%; border: 1px solid #d0d5dd; }
.radios .on { border: 5px solid #0047bb; }
.drop { margin-top: 20px; height: 126px; border: 1px solid #e4e9f0; border-radius: 12px; display: flex; flex-direction: column; align-items: center; padding-top: 15px; color: #5b6676; }
.drop .ic { color: #344054; }
.drop p { line-height: 20px; margin-top: 12px; }
.drop b { font-weight: 600; color: #0b5cf0; }
.drop small { font-size: 12px; line-height: 18px; margin-top: 4px; }

.table { width: 980px; height: 619px; }
.tr { display: grid; grid-template-columns: 363px 281px 99.5px 85px 1fr; align-items: center; height: 72px; padding-left: 24px; border-bottom: 1px solid #e4e7ec; color: #1f2a3d; flex: none; }
.tr.th { height: 56px; border: 0; background: #f8fafb; border-radius: 12px 12px 0 0; font-weight: 500; color: #475467; }
.tr .field { width: 315px; padding: 0 11px; }
.caret { width: 1px; height: 18px; background: #000; margin-left: 1px; }

.ml { dominant-baseline: central; text-anchor: middle; font-family: Roboto, sans-serif; paint-order: stroke; stroke: rgba(255, 255, 255, .75); stroke-width: 2px; stroke-linejoin: round; fill: #3c4043; }
.ml.end { text-anchor: end; }
.ml.start { text-anchor: start; }
.to.area { font-size: 9.6px; font-weight: 500; letter-spacing: .5px; }
.to.road { font-size: 10.5px; fill: #4d5156; }
.to.place { font-size: 11.4px; }
.to.tiny { font-size: 9.5px; }
.to.grey { fill: #6d7680; }
.to.blue { fill: #3b78e7; }
.to.teal { fill: #0f8795; }
.to.green { fill: #2a8c46; }
.to.city { font-size: 20.5px; font-weight: 500; fill: #202124; }
.ca { stroke: rgba(230, 250, 240, .6); }
.ca.area { font-size: 7.8px; font-weight: 500; letter-spacing: .5px; fill: #4a5a5a; }
.ca.town { font-size: 10px; font-weight: 500; text-anchor: start; fill: #202124; }
.ca.town.end { text-anchor: end; }
.edo { font: 700 7px Roboto, sans-serif; fill: #e0433c; text-anchor: middle; }
.transit text { font: 700 5.5px Roboto, sans-serif; fill: #fff; text-anchor: middle; }
</style>
